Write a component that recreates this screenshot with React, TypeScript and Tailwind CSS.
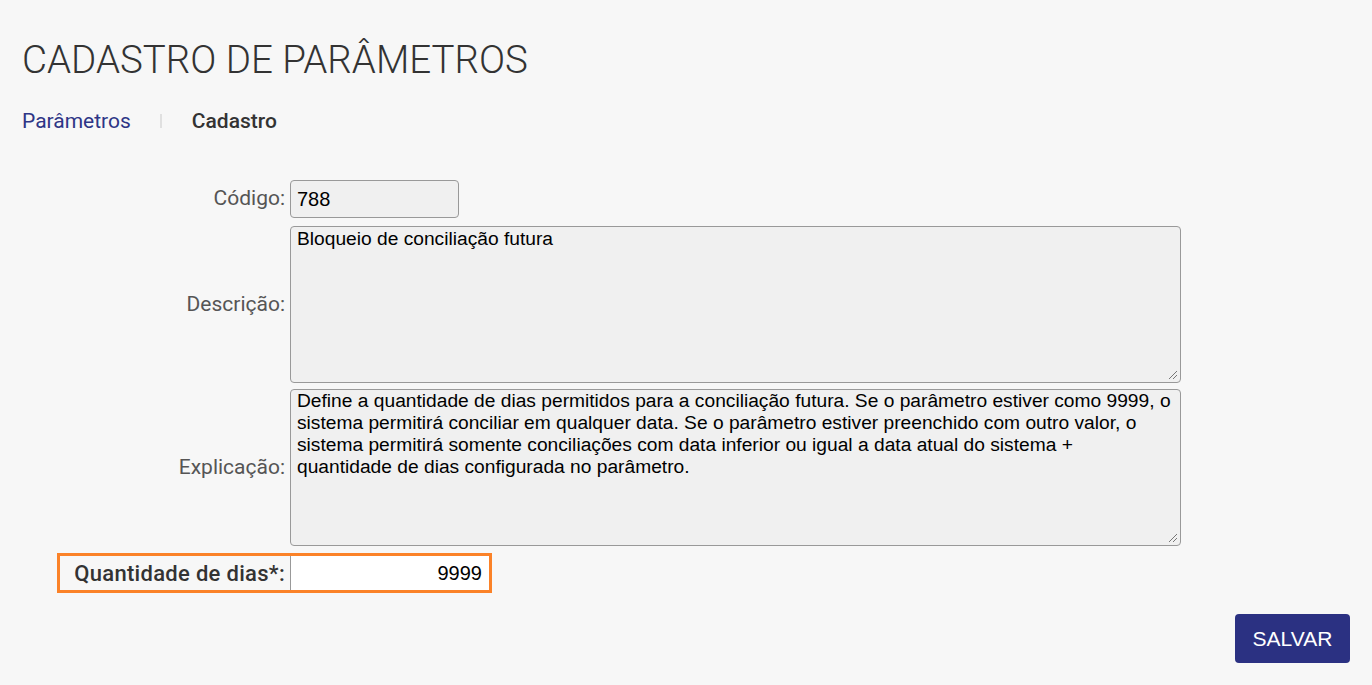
import React from "react";

export default function App() {
  const label = "text-right pr-[5px] text-[21px] text-[#555] font-['Roboto',sans-serif]";
  const field =
    "bg-[#f0f0f0] border border-[#999] rounded-[4px] text-black font-['Liberation_Sans',Arial,sans-serif]";
  return (
    <div className="min-h-[685px] w-full bg-[#f7f7f7] font-['Roboto',sans-serif]">
      <div className="px-[22px] pt-[36px]">
        <h1 className="text-[38.5px] font-light leading-[48px] text-[#333]">
          CADASTRO DE PARÂMETROS
        </h1>
        <div className="mt-[25px] flex items-center text-[21px] leading-[24px]">
          <span className="text-[#2e3586]">Parâmetros</span>
          <span className="ml-[29px] mr-[30px] h-[14px] w-[2px] bg-[#e0e0e0]" />
          <span className="font-medium text-[#333]">Cadastro</span>
        </div>
      </div>

      <div className="mt-[47px] flex flex-col">
        <div className="flex items-center">
          <div className={`w-[290px] ${label}`}>Código:</div>
          <div className={`h-[38px] w-[169px] px-[6px] flex items-center text-[20px] ${field}`}>788</div>
        </div>
        <div className="mt-[8px] flex items-center">
          <div className={`w-[290px] ${label}`}>Descrição:</div>
          <div className={`relative h-[157px] w-[891px] px-[6px] pt-[1px] text-[19.2px] leading-[22px] ${field}`}>
            Bloqueio de conciliação futura
            <Grip />
          </div>
        </div>
        <div className="mt-[6px] flex items-center">
          <div className={`w-[290px] ${label}`}>Explicação:</div>
          <div className={`relative h-[157px] w-[891px] px-[6px] pt-[0px] text-[19.2px] leading-[22px] ${field}`}>
            Define a quantidade de dias permitidos para a conciliação futura. Se o parâmetro estiver como 9999, o
            sistema permitirá conciliar em qualquer data. Se o parâmetro estiver preenchido com outro valor, o
            sistema permitirá somente conciliações com data inferior ou igual a data atual do sistema +{" "}
            <br />
            quantidade de dias configurada no parâmetro.
            <Grip />
          </div>
        </div>
        <div className="mt-[7px] ml-[57px] flex h-[40px] w-[435px] items-stretch border-[3px] border-[#fb8228]">
          <div className="flex w-[230px] items-center justify-end pr-[5px] text-[22px] font-medium tracking-[0.3px] text-[#333]">
            Quantidade de dias*:
          </div>
          <div className="flex flex-1 items-center justify-end border-l border-[#999] bg-white pr-[7px] text-[20px] text-black font-['Liberation_Sans',Arial,sans-serif]">
            9999
          </div>
        </div>
      </div>

      <div className="mt-[21px] flex justify-end pr-[22px]">
        <button className="h-[49px] w-[115px] rounded-[4px] bg-[#2b3182] text-[21px] text-white font-['Liberation_Sans',Arial,sans-serif]">
          SALVAR
        </button>
      </div>
    </div>
  );
}

function Grip() {
  return (
    <svg className="absolute bottom-[2px] right-[2px]" width="10" height="10" viewBox="0 0 10 10">
      <line x1="9" y1="1" x2="1" y2="9" stroke="#777" strokeWidth="1" />
      <line x1="9" y1="5" x2="5" y2="9" stroke="#777" strokeWidth="1" />
    </svg>
  );
}
